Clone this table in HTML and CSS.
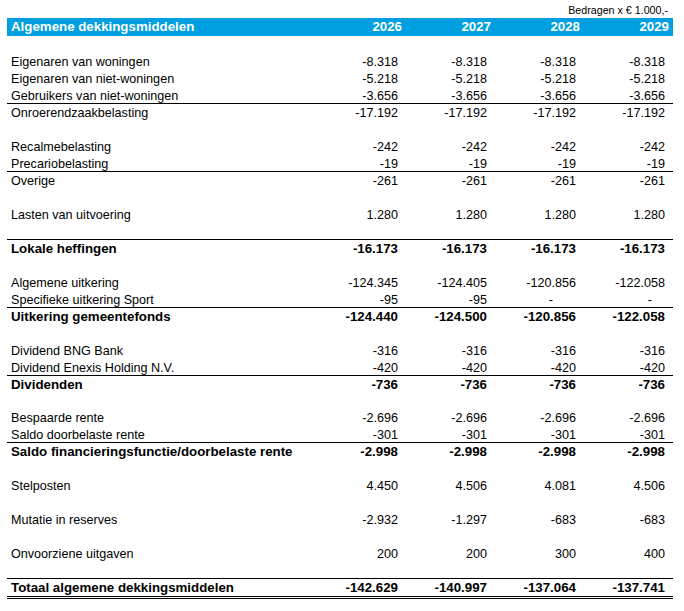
FILE: index.html
```html
<!DOCTYPE html>
<html lang="nl">
<head>
<meta charset="utf-8">
<title>Algemene dekkingsmiddelen</title>
<link rel="stylesheet" href="styles.css">
</head>
<body>
<div class="sheet">
  <div class="unit">Bedragen x € 1.000,-</div>
  <div class="row head"><span class="label">Algemene dekkingsmiddelen</span><span>2026</span><span>2027</span><span>2028</span><span>2029</span></div>
  <div class="row blank"></div>
  <div class="row"><span class="label">Eigenaren van woningen</span><span>-8.318</span><span>-8.318</span><span>-8.318</span><span>-8.318</span></div>
  <div class="row"><span class="label">Eigenaren van niet-woningen</span><span>-5.218</span><span>-5.218</span><span>-5.218</span><span>-5.218</span></div>
  <div class="row line"><span class="label">Gebruikers van niet-woningen</span><span>-3.656</span><span>-3.656</span><span>-3.656</span><span>-3.656</span></div>
  <div class="row"><span class="label">Onroerendzaakbelasting</span><span>-17.192</span><span>-17.192</span><span>-17.192</span><span>-17.192</span></div>
  <div class="row blank"></div>
  <div class="row"><span class="label">Recalmebelasting</span><span>-242</span><span>-242</span><span>-242</span><span>-242</span></div>
  <div class="row line"><span class="label">Precariobelasting</span><span>-19</span><span>-19</span><span>-19</span><span>-19</span></div>
  <div class="row"><span class="label">Overige</span><span>-261</span><span>-261</span><span>-261</span><span>-261</span></div>
  <div class="row blank"></div>
  <div class="row"><span class="label">Lasten van uitvoering</span><span>1.280</span><span>1.280</span><span>1.280</span><span>1.280</span></div>
  <div class="row blank line"></div>
  <div class="row total"><span class="label">Lokale heffingen</span><span>-16.173</span><span>-16.173</span><span>-16.173</span><span>-16.173</span></div>
  <div class="row blank"></div>
  <div class="row"><span class="label">Algemene uitkering</span><span>-124.345</span><span>-124.405</span><span>-120.856</span><span>-122.058</span></div>
  <div class="row line"><span class="label">Specifieke uitkering Sport</span><span>-95</span><span>-95</span><span class="dash dash-a">-</span><span class="dash dash-b">-</span></div>
  <div class="row total"><span class="label">Uitkering gemeentefonds</span><span>-124.440</span><span>-124.500</span><span>-120.856</span><span>-122.058</span></div>
  <div class="row blank"></div>
  <div class="row"><span class="label">Dividend BNG Bank</span><span>-316</span><span>-316</span><span>-316</span><span>-316</span></div>
  <div class="row line"><span class="label">Dividend Enexis Holding N.V.</span><span>-420</span><span>-420</span><span>-420</span><span>-420</span></div>
  <div class="row total"><span class="label">Dividenden</span><span>-736</span><span>-736</span><span>-736</span><span>-736</span></div>
  <div class="row blank short"></div>
  <div class="row"><span class="label">Bespaarde rente</span><span>-2.696</span><span>-2.696</span><span>-2.696</span><span>-2.696</span></div>
  <div class="row line"><span class="label">Saldo doorbelaste rente</span><span>-301</span><span>-301</span><span>-301</span><span>-301</span></div>
  <div class="row total"><span class="label">Saldo financieringsfunctie/doorbelaste rente</span><span>-2.998</span><span>-2.998</span><span>-2.998</span><span>-2.998</span></div>
  <div class="row blank"></div>
  <div class="row"><span class="label">Stelposten</span><span>4.450</span><span>4.506</span><span>4.081</span><span>4.506</span></div>
  <div class="row blank"></div>
  <div class="row"><span class="label">Mutatie in reserves</span><span>-2.932</span><span>-1.297</span><span>-683</span><span>-683</span></div>
  <div class="row blank"></div>
  <div class="row"><span class="label">Onvoorziene uitgaven</span><span>200</span><span>200</span><span>300</span><span>400</span></div>
  <div class="row blank line"></div>
  <div class="row total grand"><span class="label">Totaal algemene dekkingsmiddelen</span><span>-142.629</span><span>-140.997</span><span>-137.064</span><span>-137.741</span></div>
</div>
</body>
</html>
```
FILE: styles.css
```css
html, body {
  margin: 0;
  padding: 0;
  background: #ffffff;
}

body {
  font-family: "Liberation Sans", Arial, sans-serif;
  color: #000000;
}

.sheet {
  width: 666px;
  margin-left: 7px;
}

.unit {
  height: 18px;
  line-height: 20px;
  font-size: 10.7px;
  text-align: right;
  padding-right: 5px;
  box-sizing: border-box;
}

.row {
  display: grid;
  grid-template-columns: 310px repeat(4, 89px);
  height: 17px;
  line-height: 17px;
  font-size: 12.6px;
  box-sizing: border-box;
  white-space: nowrap;
}

.row.short {
  height: 16px;
}

.row > span {
  text-align: right;
  padding-right: 8px;
  padding-top: 1px;
  overflow: visible;
}

.row > .label {
  text-align: left;
  padding-left: 4px;
  padding-right: 0;
}

.row > .dash-a {
  padding-right: 31px;
}

.row > .dash-b {
  padding-right: 21px;
}

.head {
  height: 18px;
  line-height: 18px;
  background: #009fe0;
  color: #ffffff;
  font-weight: bold;
  font-size: 13.3px;
}

.head > span {
  padding-right: 4px;
  padding-top: 0;
}

.line {
  border-bottom: 1px solid #000000;
}

.total {
  font-weight: bold;
  font-size: 13.3px;
}

.total > span {
  padding-top: 0;
}

.grand {
  border-bottom: 3px double #000000;
  height: 20px;
}
```
